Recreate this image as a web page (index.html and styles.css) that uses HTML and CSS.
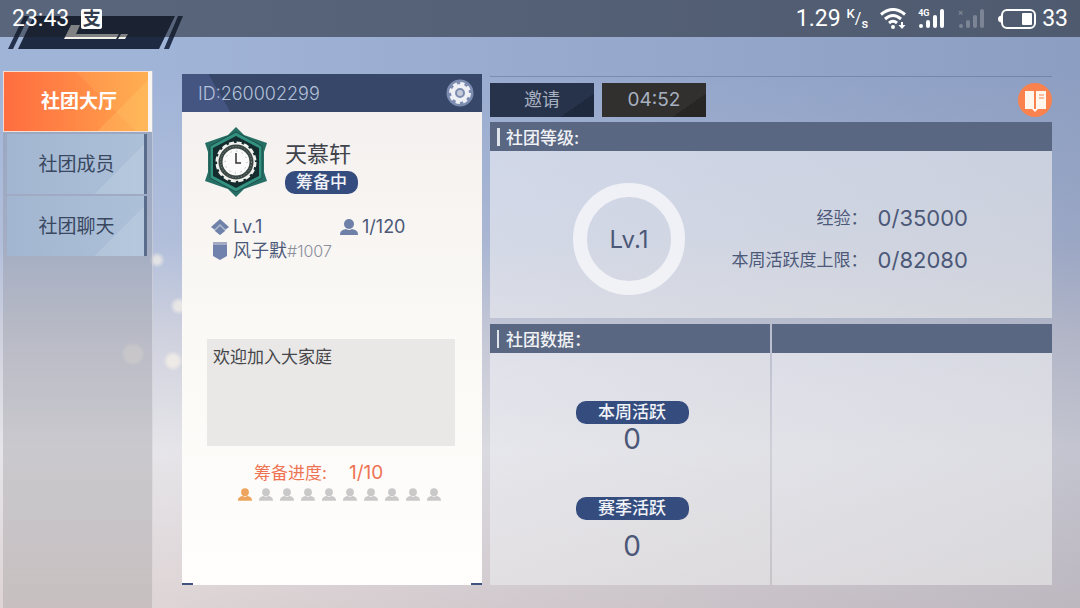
FILE: index.html
```html
<!DOCTYPE html>
<html lang="zh-CN">
  <head>
    <meta charset="UTF-8" />
    <meta name="viewport" content="width=device-width, initial-scale=1.0" />
    <title>社团大厅</title>
    <link rel="stylesheet" href="styles.css">
  </head>
  <body>
    <!-- shared shapes -->
    <svg class="defs" aria-hidden="true">
      <symbol id="person" viewBox="0 0 18 16">
        <ellipse cx="9" cy="5" rx="5" ry="5" />
        <path d="M0 16c0-4 2-5 6-6q3 2 6 0c4 1 6 2 6 6z" />
      </symbol>
      <symbol id="signal" viewBox="0 0 28 20">
        <rect x="1" y="15" width="4" height="4" rx="2" />
        <rect x="8" y="11" width="4" height="8" rx="2" />
        <rect x="15" y="6" width="4" height="13" rx="2" />
        <rect x="22" y="0" width="4" height="19" rx="2" />
      </symbol>
    </svg>

    <header class="status">
      <span>23:43</span>
      <span class="pay">支</span>
      <span class="status-right">
        <span class="speed">1.29<span class="unit"><sup>K</sup>/<sub>s</sub></span></span>
        <svg width="26" height="22" viewBox="0 0 26 22" fill="none" stroke="#fff" stroke-width="3">
          <path d="M1 6.500Q13-3.500 25 6.500" />
          <path d="M5 11Q13 4 21 11" />
          <path d="M9 15Q13 11.500 17 15" />
          <circle cx="13" cy="19" r="2" fill="#fff" stroke="none" />
          <path d="M22 14v4" stroke-width="2" />
          <path d="M18.500 17h7L22 21z" fill="#fff" stroke="none" />
        </svg>
        <span class="cell"><svg width="28" height="20"><use href="#signal" /></svg><small>4G</small></span>
        <span class="cell cell-off"><svg width="28" height="20"><use href="#signal" /></svg><small>×</small></span>
        <span class="battery">
          <svg width="38" height="20" viewBox="0 0 38 20">
            <rect x="4" y="1" width="33" height="18" rx="5" fill="none" stroke="#fff" stroke-width="2" />
            <path d="M3 6.500Q0 7 0 10t3 3.500z" fill="#fff" />
            <rect x="24" y="4" width="10" height="12" rx="1" fill="#fff" />
          </svg>
          33
        </span>
      </span>
    </header>

    <svg class="banner" width="186" height="34" viewBox="0 0 186 34" aria-hidden="true">
      <path d="M34 0h141l-16 33H18z" fill="#1e2942" />
      <path d="M24 0h5L13 33H8zM178 0h5l-14 33h-5z" fill="#232f4b" />
      <path d="M71 9h9l-4 9h43l-3 5H64zM121 18h7l-3 5h-7z" fill="#f4f0ea" />
    </svg>

    <main class="club">
      <nav class="tabs">
        <a class="tab active" href="#hall">社团大厅</a>
        <a class="tab" href="#members">社团成员</a>
        <a class="tab" href="#chat">社团聊天</a>
      </nav>

      <section class="card">
        <div class="card-head">
          <span>ID:260002299</span>
          <button class="gear" aria-label="设置">
            <svg width="28" height="28" viewBox="-14 -14 28 28">
              <circle r="13.500" fill="#7c8cb0" />
              <circle r="9" fill="none" stroke="#eef0f5" stroke-width="4" stroke-dasharray="4 3.070" />
              <circle r="6.500" fill="none" stroke="#eef0f5" stroke-width="5" />
              <circle r="4" fill="none" stroke="#7c8cb0" stroke-width="2" />
              <circle r="3" fill="#c5cad8" />
            </svg>
          </button>
        </div>

        <div class="card-body">
          <div class="intro">
            <svg width="64" height="72" viewBox="-32 -36 64 72">
              <path d="M0-35L8-27 31-19 28-10V10L31 19 8 27 0 35-8 27-31 19-28 10V-10L-31-19-8-27z" fill="#276f65" />
              <path d="M0-30L26-16V16L0 30-26 16V-16z" fill="#339180" stroke="#1b4e49" stroke-width="1" />
              <path d="M0-26L23-14V14L0 26-23 14V-14z" fill="#142c2e" />
              <circle r="19" fill="#f1f1ed" />
              <circle r="19" fill="none" stroke="#f1f1ed" stroke-width="3" stroke-dasharray="5 2.460" />
              <circle r="15.500" fill="none" stroke="#3a4745" stroke-width="4" />
              <circle r="15.500" fill="none" stroke="#8b938f" stroke-width="1" stroke-dasharray="1 2" />
              <circle r="13" fill="#fafafa" />
              <circle r="11" fill="none" stroke="#9a9e9e" stroke-width="1" stroke-dasharray="1 4.760" />
              <path d="M0-9V1H5" fill="none" stroke="#333" stroke-width="1.500" />
            </svg>
            <div>
              <h1>天慕轩</h1>
              <span class="badge">筹备中</span>
            </div>
          </div>

          <div class="facts">
            <span class="fact">
              <svg width="18" height="18" viewBox="0 0 18 18">
                <path d="M9 1l9 8-4 3H4L0 9z" fill="#7081aa" />
                <path d="M9 6l6 6-6 5-6-5z" fill="#b3bccf" />
                <path d="M9 8l5 5-5 4-5-4z" fill="#7081aa" />
              </svg>
              Lv.1
            </span>
            <span class="fact">
              <svg width="18" height="16" fill="#6f80a8"><use href="#person" /></svg>
              1/120
            </span>
            <span class="fact">
              <svg width="18" height="18" viewBox="0 0 18 18">
                <path d="M2 3h14v11l-7 4-7-4z" fill="#7183ac" />
                <path d="M2 0h14v3H2z" fill="#a3acc3" />
              </svg>
              <span>风子默<small>#1007</small></span>
            </span>
          </div>

          <textarea class="notice" aria-label="社团公告" readonly>欢迎加入大家庭</textarea>

          <div class="progress">
            <p>筹备进度:<span>1/10</span></p>
            <div class="people">
              <svg class="on"><use href="#person" /></svg>
              <svg><use href="#person" /></svg>
              <svg><use href="#person" /></svg>
              <svg><use href="#person" /></svg>
              <svg><use href="#person" /></svg>
              <svg><use href="#person" /></svg>
              <svg><use href="#person" /></svg>
              <svg><use href="#person" /></svg>
              <svg><use href="#person" /></svg>
              <svg><use href="#person" /></svg>
            </div>
          </div>
        </div>
      </section>

      <div class="detail">
        <div class="toolbar">
          <button class="btn">邀请</button>
          <span class="btn timer">04:52</span>
          <button class="book" aria-label="帮助">
            <svg width="34" height="34" viewBox="0 0 34 34">
              <circle cx="17" cy="17" r="17" fill="#f9824e" />
              <path d="M7 8h9v18H7zM18 8h10v18H18zM14 26h6l-3 3z" fill="#fff6ee" />
              <path d="M21 12h5M21 15h5" stroke="#f9824e" stroke-width="1" />
            </svg>
          </button>
        </div>

        <section class="panel">
          <h2>社团等级:</h2>
          <div class="level">
            <div class="ring">Lv.1</div>
            <dl>
              <dt>经验：</dt>
              <dd>0/35000</dd>
              <dt>本周活跃度上限：</dt>
              <dd>0/82080</dd>
            </dl>
          </div>
        </section>

        <div class="data">
          <section class="panel">
            <h2 class="thin">社团数据：</h2>
            <div class="counts">
              <div class="count"><span class="badge wide">本周活跃</span><b>0</b></div>
              <div class="count season"><span class="badge wide">赛季活跃</span><b>0</b></div>
            </div>
          </section>
          <section class="panel">
            <div class="blank-head"></div>
          </section>
        </div>
      </div>
    </main>
  </body>
</html>
```

FILE: styles.css
```css
* {
  box-sizing: border-box;
}
body {
  margin: 0;
  min-height: 100vh;
  display: flex;
  flex-direction: column;
  position: relative;
  font-family: Inter, "Noto Sans CJK SC", sans-serif;
  font-size: 17px;
  color: #4c5878;
  background:
    radial-gradient(circle at 157px 260px, rgba(255, 248, 235, 0.6) 3px, transparent 8px),
    radial-gradient(circle at 179px 306px, rgba(255, 248, 235, 0.6) 4px, transparent 9px),
    radial-gradient(circle at 173px 361px, rgba(255, 248, 235, 0.6) 5px, transparent 10px),
    radial-gradient(circle at 133px 354px, rgba(255, 248, 235, 0.4) 8px, transparent 12px),
    linear-gradient(90deg, transparent 15%, rgba(70, 80, 115, 0.22)),
    linear-gradient(#a0b4d8 12%, #b2bfdb 40%, #cfd1de 55%, #e6e5e9 74%, #ded4d5);
}
h1,
h2,
p,
dl,
dd {
  margin: 0;
  font-weight: 400;
}
button {
  border: 0;
  padding: 0;
  background: none;
  font: inherit;
}
svg {
  display: block;
  flex: none;
}
.defs {
  position: absolute;
  width: 0;
  height: 0;
}

/* phone status bar */
.status {
  position: relative;
  z-index: 1;
  display: flex;
  align-items: center;
  gap: 12px;
  height: 37px;
  padding: 0 12px;
  font-family: Roboto, "Noto Sans CJK SC", sans-serif;
  font-size: 23px;
  color: #fff;
  background: rgba(25, 31, 38, 0.53);
}
.pay {
  width: 21px;
  height: 20px;
  border-radius: 2px;
  background: #fff;
  color: #333d4d;
  font-size: 18px;
  font-weight: 700;
  line-height: 20px;
  text-align: center;
}
.status-right {
  display: flex;
  align-items: center;
  gap: 12px;
  margin-left: auto;
}
.speed,
.battery {
  display: flex;
  align-items: center;
  gap: 6px;
}
.unit {
  font-size: 16px;
  line-height: 20px;
}
.unit sup,
.unit sub {
  font-size: 13px;
  font-weight: 500;
  line-height: 0;
}
.cell {
  position: relative;
  fill: #fff;
}
.cell small {
  position: absolute;
  left: 0;
  top: -1px;
  font-size: 9px;
  font-weight: 700;
  line-height: 10px;
}
.cell-off {
  opacity: 0.25;
}
.banner {
  position: absolute;
  left: 0;
  top: 16px;
}

/* page columns */
.club {
  flex: 1;
  display: grid;
  grid-template-columns: 150px 300px 1fr;
  padding: 34px 28px 0 3px;
}
.tabs {
  display: flex;
  flex-direction: column;
  background: linear-gradient(rgba(130, 135, 150, 0.35), rgba(150, 147, 147, 0.32));
  border-right: 1px solid rgba(255, 255, 255, 0.35);
}
.tab {
  display: flex;
  align-items: center;
  justify-content: center;
  height: 60px;
  margin: 2px 5px 0 4px;
  padding: 0 0 4px 2px;
  border-right: 3px solid #5a6c8c;
  background:
    linear-gradient(135deg, transparent 75%, rgba(255, 255, 255, 0.12) 75%),
    linear-gradient(90deg, #a2b6d1, #acc0d8);
  color: #39475f;
  font-size: 19px;
  text-decoration: none;
}
.tab.active {
  height: 61px;
  margin: 0;
  padding-left: 6px;
  border: 1px solid #f6ddd2;
  border-right: 4px solid #f9f5f2;
  background:
    linear-gradient(135deg, transparent 75%, rgba(255, 220, 120, 0.2) 75%),
    linear-gradient(45deg, transparent 65%, rgba(255, 210, 110, 0.15) 65%),
    linear-gradient(90deg, #ff6d40, #ff8545 45%, #ffa84c);
  color: #fff;
  font-weight: 700;
}

/* club card */
.card {
  display: flex;
  flex-direction: column;
  margin: 3px -29px 23px 29px;
  background:
    linear-gradient(#3f5480, #3f5480) left bottom / 11px 2px no-repeat,
    linear-gradient(#3f5480, #3f5480) right bottom / 11px 2px no-repeat,
    linear-gradient(#f3efee, #fbf9f6 50%, #fffefc);
}
.card-head {
  display: flex;
  align-items: center;
  justify-content: space-between;
  height: 38px;
  padding: 0 8px 0 16px;
  background: linear-gradient(60deg, #445582 15%, #364769 15%);
  color: #b4c1da;
  font-size: 18px;
  font-weight: 300;
}
.card-body {
  display: flex;
  flex-direction: column;
  padding: 14px 27px 0 22px;
}
.intro {
  display: flex;
  align-items: center;
  gap: 17px;
}
.intro h1 {
  padding-top: 2px;
  font-size: 22px;
  line-height: 34px;
  color: #40434c;
}
.badge {
  display: block;
  width: 73px;
  height: 23px;
  border-radius: 10px;
  background: #354d7e;
  color: #f1f3f8;
  font-size: 17px;
  font-weight: 500;
  line-height: 23px;
  text-align: center;
}
.intro .badge {
  margin-bottom: -4px;
}
.facts {
  display: grid;
  grid-template-columns: 129px 1fr;
  padding: 17px 0 0 7px;
  font-size: 18px;
  line-height: 24px;
}
.fact {
  display: flex;
  align-items: center;
  gap: 4px;
  white-space: nowrap;
}
.fact small {
  font-size: 16px;
  font-weight: 300;
  color: #8b8f9b;
}
.notice {
  height: 107px;
  margin: 76px 0 0 3px;
  padding: 6px;
  border: 0;
  border-radius: 0;
  resize: none;
  outline: 0;
  background: #e9e8e7;
  color: #46464a;
  font: 17px/24px Inter, "Noto Sans CJK SC", sans-serif;
}
.progress {
  padding: 15px 0 0 34px;
  color: #ee7353;
}
.progress p {
  padding-left: 16px;
  line-height: 24px;
}
.progress span {
  margin-left: 22px;
  font-size: 19px;
}
.people {
  display: flex;
  gap: 7px;
  padding-top: 3px;
}
.people svg {
  width: 14px;
  height: 13px;
  fill: #cac9c9;
}
.people .on {
  fill: #eda55d;
}

/* right side */
.detail {
  display: flex;
  flex-direction: column;
  gap: 6px;
  margin: 5px 0 23px 37px;
  border-top: 1px solid rgba(80, 95, 130, 0.4);
}
.toolbar {
  display: flex;
  align-items: center;
  gap: 8px;
  height: 39px;
  padding-top: 7px;
}
.btn {
  width: 104px;
  height: 34px;
  background: linear-gradient(145deg, #27334b 78%, #1f293d 78%);
  color: #a7b0c0;
  font-size: 18px;
  line-height: 34px;
  text-align: center;
}
.timer {
  background: linear-gradient(145deg, #31302f 78%, #272625 78%);
  font-size: 19px;
}
.book {
  margin-left: auto;
}
.panel {
  background: linear-gradient(160deg, rgba(240, 241, 248, 0.6), rgba(232, 232, 232, 0.65));
}
.panel h2,
.blank-head {
  height: 29px;
  background: #5a6782;
}
.panel h2 {
  display: flex;
  align-items: center;
  gap: 6px;
  padding-left: 7px;
  color: #f0f2f6;
  font-size: 17px;
  font-weight: 500;
}
.panel h2::before {
  content: "";
  width: 3px;
  height: 18px;
  background: #dfe3ea;
}
.panel h2.thin {
  gap: 7px;
}
.panel .thin::before {
  width: 2px;
}
.level {
  display: flex;
  align-items: center;
  justify-content: space-between;
  height: 167px;
  padding: 9px 84px 0 83px;
}
.ring {
  flex: none;
  width: 112px;
  height: 112px;
  border: 14px solid rgba(247, 248, 250, 0.8);
  border-radius: 50%;
  font-size: 24px;
  line-height: 86px;
  text-align: center;
}
.level dl {
  display: grid;
  grid-template-columns: auto auto;
  gap: 0 10px;
  align-items: center;
  line-height: 42px;
  white-space: nowrap;
}
.level dt {
  text-align: right;
}
.level dd {
  font-size: 22px;
}
.data {
  flex: 1;
  display: grid;
  grid-template-columns: 1fr 1fr;
  gap: 2px;
}
.counts {
  display: flex;
  flex-direction: column;
  gap: 43px;
  padding: 48px 0 20px 4px;
}
.count {
  display: flex;
  flex-direction: column;
  align-items: center;
}
.season {
  gap: 11px;
}
.wide {
  width: 113px;
}
.count b {
  font-size: 28px;
  font-weight: 400;
  line-height: 30px;
}
```
